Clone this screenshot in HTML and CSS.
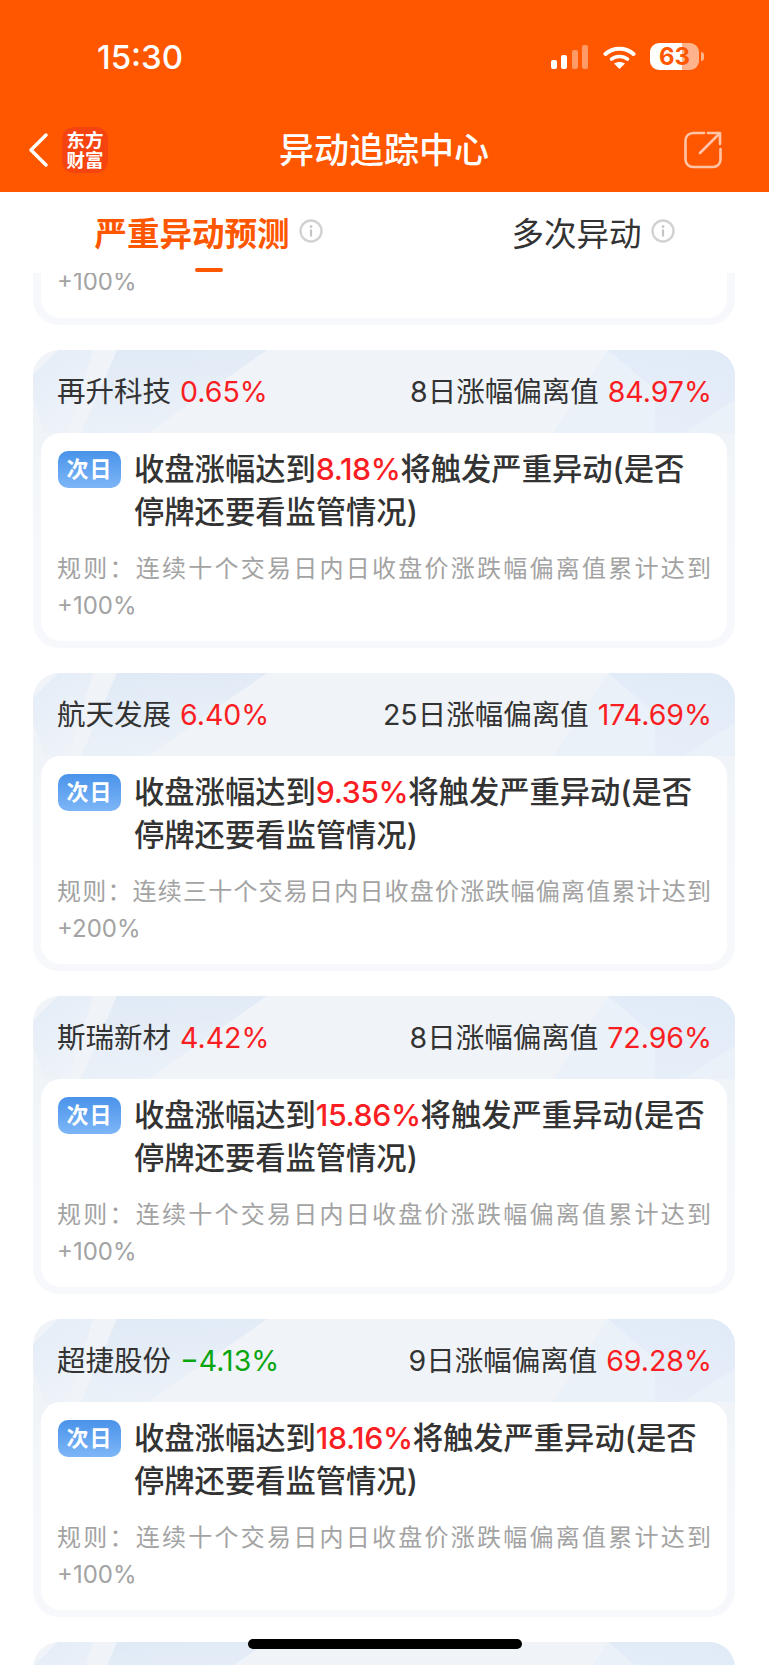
FILE: index.html
```html
<!DOCTYPE html>
<html lang="zh">
<head>
  <meta charset="UTF-8">
  <title>异动追踪中心</title>
  <link rel="stylesheet" href="styles.css">
</head>
<body>
<svg class="defs" width="0" height="0">
  <defs>
    <linearGradient id="fadeA" x1="0.3" y1="0" x2="0.5" y2="1">
      <stop offset="0" stop-color="#e0eaf6"/>
      <stop offset="1" stop-color="#e0eaf6" stop-opacity="0.25"/>
    </linearGradient>
    <linearGradient id="fadeL" x1="0" y1="0" x2="0.5" y2="1">
      <stop offset="0" stop-color="#e0eaf6" stop-opacity="0.8"/>
      <stop offset="1" stop-color="#e0eaf6" stop-opacity="0.1"/>
    </linearGradient>
    <linearGradient id="fadeB" x1="0.7" y1="0" x2="0.4" y2="1">
      <stop offset="0" stop-color="#e1ebf8"/>
      <stop offset="1" stop-color="#e1ebf8" stop-opacity="0.45"/>
    </linearGradient>
    <symbol id="decor" viewBox="0 0 702 83">
      <polygon points="0,50 0,25 25,0 60,0 36,83 12,83" fill="url(#fadeL)"/>
      <polygon points="84,0 234,0 115,83 48,83" fill="url(#fadeA)"/>
      <polygon points="520,83 575,0 702,0 702,83" fill="#e1ebf8" fill-opacity="0.3"/>
      <polygon points="575,0 702,0 702,50 650,83 622,83 622,40" fill="url(#fadeB)"/>
    </symbol>
  </defs>
</svg>

<div class="page">
  <div class="header">
    <div class="status">
      <span class="time">15:30</span>
      <div class="status-icons">
        <div class="signal">
          <i class="b1"></i><i class="b2"></i><i class="b3 dim"></i><i class="b4 dim"></i>
        </div>
        <svg class="wifi" width="33" height="24" viewBox="0 0 33 24">
          <path d="M2.5 9 C10 2 23 2 30.5 9" fill="none" stroke="#fff" stroke-width="4" stroke-linecap="round"/>
          <path d="M8.5 14.2 C13 10.6 20 10.6 24.5 14.2" fill="none" stroke="#fff" stroke-width="3.6" stroke-linecap="round"/>
          <path d="M16.5 24 L11 18.6 C14 16.4 19 16.4 22 18.6 Z" fill="#fff"/>
        </svg>
        <div class="battery">
          <span class="battery-num">63</span>
        </div>
        <span class="battery-nub"></span>
      </div>
    </div>
    <div class="nav">
      <div class="nav-left">
        <svg class="back" width="20" height="34" viewBox="0 0 20 34">
          <path d="M18 2 L3 17 L18 32" fill="none" stroke="#fff" stroke-width="3.4" stroke-linecap="round" stroke-linejoin="round"/>
        </svg>
        <div class="logo">东方<br>财富</div>
      </div>
      <div class="nav-title">异动追踪中心</div>
      <div class="nav-right">
        <svg width="38" height="38" viewBox="0 0 38 38">
          <path d="M20 2 H9 A7.5 7.5 0 0 0 1.5 9.5 V28.5 A7.5 7.5 0 0 0 9 36 H29 A7.5 7.5 0 0 0 36.5 28.5 V18" fill="none" stroke="#fff" stroke-opacity="0.65" stroke-width="2.6" stroke-linecap="round"/>
          <path d="M16 22 L35.5 2.5 M24 2 H36 V13" fill="none" stroke="#fff" stroke-opacity="0.65" stroke-width="2.6" stroke-linecap="round" stroke-linejoin="round"/>
        </svg>
      </div>
    </div>
  </div>

  <div class="tabs">
    <div class="tab tab-active">
      严重异动预测
      <svg class="info" width="24" height="24" viewBox="0 0 24 24">
        <circle cx="12" cy="12" r="10.5" fill="none" stroke="#d2d2d2" stroke-width="2.4"/>
        <circle cx="12" cy="7.6" r="1.4" fill="#c4c4c4"/>
        <rect x="10.9" y="10.5" width="2.2" height="7" fill="#c4c4c4"/>
      </svg>
    </div>
    <div class="tab">
      多次异动
      <svg class="info" width="24" height="24" viewBox="0 0 24 24">
        <circle cx="12" cy="12" r="10.5" fill="none" stroke="#d2d2d2" stroke-width="2.4"/>
        <circle cx="12" cy="7.6" r="1.4" fill="#c4c4c4"/>
        <rect x="10.9" y="10.5" width="2.2" height="7" fill="#c4c4c4"/>
      </svg>
    </div>
  </div>

  <div class="list">
    <div class="card card-cut">
      <div class="panel">
        <p class="rule">+100%</p>
      </div>
    </div>

    <div class="card">
      <svg class="decor"><use href="#decor"/></svg>
      <div class="card-head">
        <div class="stock"><span>再升科技</span><span class="up">0.65%</span></div>
        <div class="stock"><span>8日涨幅偏离值</span><span class="up">84.97%</span></div>
      </div>
      <div class="panel">
        <div class="panel-top">
          <span class="badge">次日</span>
          <p class="title">收盘涨幅达到<span class="up">8.18%</span>将触发严重异动(是否停牌还要看监管情况)</p>
        </div>
        <p class="rule">规则：连续十个交易日内日收盘价涨跌幅偏离值累计达到+100%</p>
      </div>
    </div>

    <div class="card">
      <svg class="decor"><use href="#decor"/></svg>
      <div class="card-head">
        <div class="stock"><span>航天发展</span><span class="up">6.40%</span></div>
        <div class="stock"><span>25日涨幅偏离值</span><span class="up">174.69%</span></div>
      </div>
      <div class="panel">
        <div class="panel-top">
          <span class="badge">次日</span>
          <p class="title">收盘涨幅达到<span class="up">9.35%</span>将触发严重异动(是否停牌还要看监管情况)</p>
        </div>
        <p class="rule">规则：连续三十个交易日内日收盘价涨跌幅偏离值累计达到+200%</p>
      </div>
    </div>

    <div class="card">
      <svg class="decor"><use href="#decor"/></svg>
      <div class="card-head">
        <div class="stock"><span>斯瑞新材</span><span class="up">4.42%</span></div>
        <div class="stock"><span>8日涨幅偏离值</span><span class="up">72.96%</span></div>
      </div>
      <div class="panel">
        <div class="panel-top">
          <span class="badge">次日</span>
          <p class="title">收盘涨幅达到<span class="up">15.86%</span>将触发严重异动(是否停牌还要看监管情况)</p>
        </div>
        <p class="rule">规则：连续十个交易日内日收盘价涨跌幅偏离值累计达到+100%</p>
      </div>
    </div>

    <div class="card">
      <svg class="decor"><use href="#decor"/></svg>
      <div class="card-head">
        <div class="stock"><span>超捷股份</span><span class="down">−4.13%</span></div>
        <div class="stock"><span>9日涨幅偏离值</span><span class="up">69.28%</span></div>
      </div>
      <div class="panel">
        <div class="panel-top">
          <span class="badge">次日</span>
          <p class="title">收盘涨幅达到<span class="up">18.16%</span>将触发严重异动(是否停牌还要看监管情况)</p>
        </div>
        <p class="rule">规则：连续十个交易日内日收盘价涨跌幅偏离值累计达到+100%</p>
      </div>
    </div>

    <div class="card card-next">
      <svg class="decor"><use href="#decor"/></svg>
    </div>
  </div>

  <div class="home-bar"></div>
</div>
</body>
</html>
```

FILE: styles.css
```css
* {
  box-sizing: border-box;
}

body {
  margin: 0;
  background: #fff;
  font-family: Inter, "Noto Sans CJK SC", sans-serif;
  color: #333;
}

p {
  margin: 0;
}

.defs {
  position: absolute;
}

.page {
  position: relative;
  height: 1665px;
  overflow: hidden;
  display: flex;
  flex-direction: column;
}

/* orange top */
.header {
  height: 192px;
  background: #ff5700;
  color: #fff;
  flex: none;
}

.status {
  height: 100px;
  padding: 43px 0 0 97px;
  display: flex;
  justify-content: space-between;
}

.time {
  font-size: 33px;
  font-weight: 500;
  line-height: 28px;
}

.status-icons {
  display: flex;
  align-items: flex-start;
  padding-right: 65px;
  height: 28px;
}

.signal {
  display: flex;
  align-items: flex-end;
  gap: 4.3px;
  height: 24px;
  margin: 2px 15px 0 0;
}

.signal i {
  display: block;
  width: 6px;
  background: #fff;
  border-radius: 2px;
}

.signal .dim {
  opacity: 0.4;
}

.b1 { height: 9px; }
.b2 { height: 14px; }
.b3 { height: 19px; }
.b4 { height: 24px; }

.wifi {
  margin: 2px 14px 0 0;
}

.battery {
  width: 49px;
  height: 27px;
  border-radius: 9px;
  background: linear-gradient(90deg, #fff 0, #fff 66%, #ffb38c 66%, #ffb38c 100%);
  color: #ff5700;
  font-size: 24px;
  font-weight: 700;
  line-height: 27px;
  text-align: center;
}

.battery-nub {
  width: 3px;
  height: 9px;
  margin: 9px 0 0 2px;
  background: #ffb38c;
  border-radius: 0 3px 3px 0;
}

.nav {
  height: 92px;
  display: grid;
  grid-template-columns: 1fr auto 1fr;
  align-items: center;
  padding: 7px 47px 0 28px;
}

.nav-left {
  display: flex;
  align-items: center;
  gap: 14px;
}

.logo {
  width: 46px;
  height: 46px;
  border-radius: 12px;
  background: #f5440f;
  font-size: 18.5px;
  font-weight: 700;
  line-height: 20px;
  text-align: center;
  padding-top: 3px;
}

.nav-title {
  font-size: 35px;
  font-weight: 500;
  line-height: 46px;
  position: relative;
  left: 9px;
}

.nav-right {
  display: flex;
  justify-content: flex-end;
}

/* tabs */
.tabs {
  height: 81px;
  display: flex;
  flex: none;
  background: #fff;
}

.tab {
  position: relative;
  display: flex;
  align-items: center;
  justify-content: center;
  gap: 9px;
  font-size: 32.5px;
  padding-bottom: 3px;
  flex: 1;
}

.tab-active {
  flex: 0 0 417px;
  color: #ff5700;
  font-weight: 700;
}

.tab-active::after {
  content: "";
  position: absolute;
  left: 195px;
  bottom: 1px;
  width: 28px;
  height: 4px;
  border-radius: 2px;
  background: #ff5700;
}

/* cards */
.list {
  flex: 1;
  overflow: hidden;
  padding: 0 34px 0 33px;
}

.card {
  position: relative;
  overflow: hidden;
  border-radius: 26px;
  background: linear-gradient(180deg, #f0f4f9 0, #f0f4f9 83px, #f6f8fb 200px);
  padding: 0 8px 7px;
  margin-bottom: 25px;
}

.card-cut {
  border-radius: 0 0 26px 26px;
  background: #f6f8fb;
}

.card-cut .panel {
  border-radius: 0 0 20px 20px;
  padding: 0 16px 27px;
}

.card-next {
  height: 60px;
}

.decor {
  position: absolute;
  left: 0;
  top: 0;
  width: 702px;
  height: 83px;
}

.card-head {
  position: relative;
  height: 83px;
  padding: 0 15px 0 16px;
  display: flex;
  justify-content: space-between;
  align-items: center;
  font-size: 28.5px;
  line-height: 40px;
}

.stock {
  display: flex;
  gap: 9px;
}

.up {
  color: #fa1e23;
}

.down {
  color: #09a50f;
}

.panel {
  position: relative;
  background: #fff;
  border-radius: 20px;
  padding: 14.5px 16px 17.5px;
}

.panel-top {
  display: flex;
  gap: 13px;
  align-items: flex-start;
  margin: 0 -2px 0 1px;
}

.badge {
  flex: none;
  width: 63px;
  height: 37px;
  margin-top: 3.5px;
  border-radius: 10px;
  background: linear-gradient(180deg, #4a93ea 0, #7db6f7 100%);
  color: #fff;
  font-size: 22px;
  font-weight: 700;
  line-height: 37px;
  text-align: center;
  letter-spacing: 1px;
}

.title {
  font-size: 30.3px;
  font-weight: 500;
  line-height: 43px;
}

.title .up {
  letter-spacing: -0.4px;
}

.rule {
  margin-top: 16px;
  font-size: 24px;
  line-height: 37px;
  color: #a3a3a3;
  text-align: justify;
}

.card-cut .rule {
  margin-top: 0;
  line-height: 18px;
}

.home-bar {
  position: absolute;
  left: 248px;
  top: 1639px;
  width: 274px;
  height: 10px;
  border-radius: 5px;
  background: #000;
}
```
